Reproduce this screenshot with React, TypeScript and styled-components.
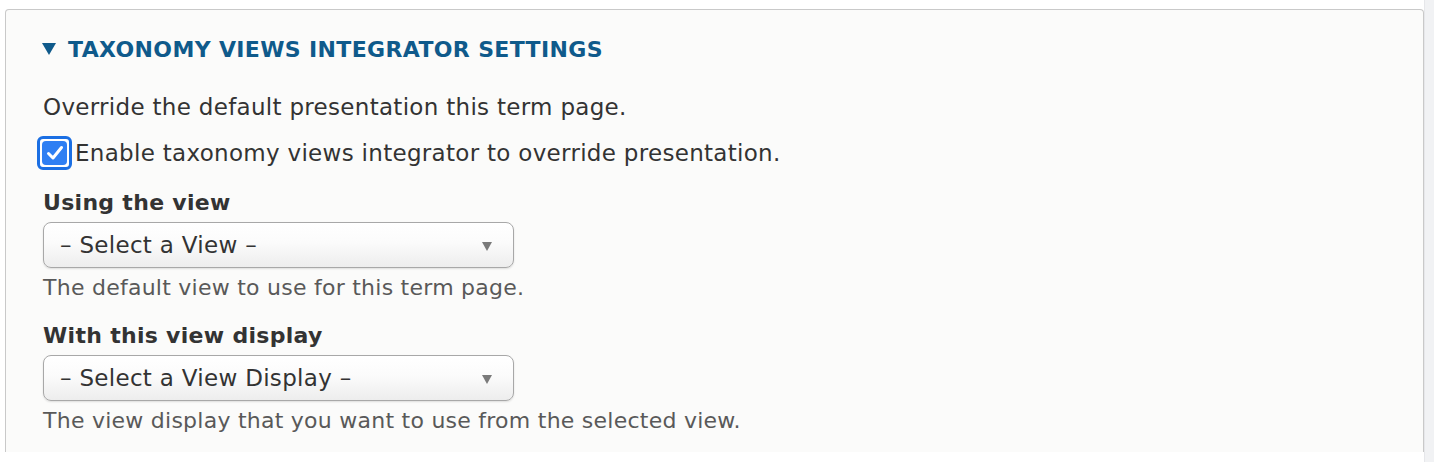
import React from 'react'
import styled, { createGlobalStyle } from 'styled-components'

const GlobalStyle = createGlobalStyle`
    html, body {
        margin: 0;
        padding: 0;
        background: #ffffff;
    }
    body {
        font-family: "DejaVu Sans", Verdana, sans-serif;
        color: #333333;
    }
`;

const Page = styled.div`
    display: flex;
    width: 1434px;
    height: 462px;
    overflow: hidden;
`;

const Panel = styled.fieldset`
    flex: 1;
    margin: 9px 0 10px 5px;
    padding: 25px 0 0 37px;
    border: 1px solid #c9c9c9;
    border-bottom: none;
    border-radius: 4px 4px 0 0;
    background: #fbfbfa;
    min-width: 0;
`;

const SideStrip = styled.div`
    width: 9px;
    background: #f1f2f4;
    border-left: 1px solid #e6e7ea;
`;

const Legend = styled.div`
    display: flex;
    align-items: center;
    gap: 12px;
    height: 28px;
    margin-left: -1px;
    color: #0f5a8b;
    font-weight: bold;
    font-size: 22px;
    text-transform: uppercase;
    letter-spacing: 0.35px;
`;

const Triangle = styled.span`
    width: 0;
    height: 0;
    border-left: 7px solid transparent;
    border-right: 7px solid transparent;
    border-top: 12px solid #0f5a8b;
`;

const Description = styled.p`
    margin: 30px 0 0;
    font-size: 23px;
    line-height: 28px;
    letter-spacing: 0.3px;
`;

const CheckRow = styled.label`
    display: flex;
    align-items: center;
    gap: 3px;
    margin: 15px 0 0 -6px;
    font-size: 23px;
    line-height: 28px;
    letter-spacing: 0.3px;
`;

const CheckRing = styled.span`
    display: flex;
    align-items: center;
    justify-content: center;
    box-sizing: border-box;
    width: 35px;
    height: 34px;
    border: 3px solid #1b6fe3;
    border-radius: 6px;
    background: #ffffff;
`;

const CheckBox = styled.span`
    display: flex;
    align-items: center;
    justify-content: center;
    width: 25px;
    height: 24px;
    border-radius: 4px;
    background: #2f7ff3;
`;

const FormItem = styled.div`
    margin-top: ${(p: { $gap: number }) => p.$gap}px;
`;

const Label = styled.div`
    font-size: 22px;
    line-height: 28px;
    font-weight: bold;
    letter-spacing: 0.3px;
`;

const SelectBox = styled.div`
    position: relative;
    box-sizing: border-box;
    display: flex;
    align-items: center;
    width: 471px;
    height: 46px;
    margin-top: 5px;
    padding-left: 16px;
    border: 1px solid #a8a8a8;
    border-radius: 8px;
    background: linear-gradient(#ffffff 0%, #fbfbfb 45%, #ededed 100%);
    box-shadow: 0 1px 2px rgba(0, 0, 0, 0.12);
    font-size: 23px;
    letter-spacing: 0.3px;
    color: #333333;
`;

const Arrow = styled.span`
    position: absolute;
    right: 21px;
    top: 19px;
    width: 0;
    height: 0;
    border-left: 5px solid transparent;
    border-right: 5px solid transparent;
    border-top: 9px solid #7a7a7a;
`;

const Help = styled.div`
    margin-top: 6px;
    font-size: 22px;
    line-height: 28px;
    letter-spacing: 0.25px;
    color: #595959;
`;

function Select({ text }: { text: string }) {
    return (
        <SelectBox>
            {text}
            <Arrow />
        </SelectBox>
    )
}

export default function App() {
    return (
        <Page>
            <GlobalStyle />
            <Panel>
                <Legend>
                    <Triangle />
                    Taxonomy views integrator settings
                </Legend>
                <Description>Override the default presentation this term page.</Description>
                <CheckRow>
                    <CheckRing>
                        <CheckBox>
                            <svg width="18" height="16" viewBox="0 0 18 16">
                                <path d="M2.5 8.5 L7 13 L15.5 2.5" fill="none" stroke="#ffffff" strokeWidth="3" strokeLinecap="round" strokeLinejoin="round" />
                            </svg>
                        </CheckBox>
                    </CheckRing>
                    Enable taxonomy views integrator to override presentation.
                </CheckRow>
                <FormItem $gap={19}>
                    <Label>Using the view</Label>
                    <Select text="– Select a View –" />
                    <Help>The default view to use for this term page.</Help>
                </FormItem>
                <FormItem $gap={20}>
                    <Label>With this view display</Label>
                    <Select text="– Select a View Display –" />
                    <Help>The view display that you want to use from the selected view.</Help>
                </FormItem>
            </Panel>
            <SideStrip />
        </Page>
    )
}
